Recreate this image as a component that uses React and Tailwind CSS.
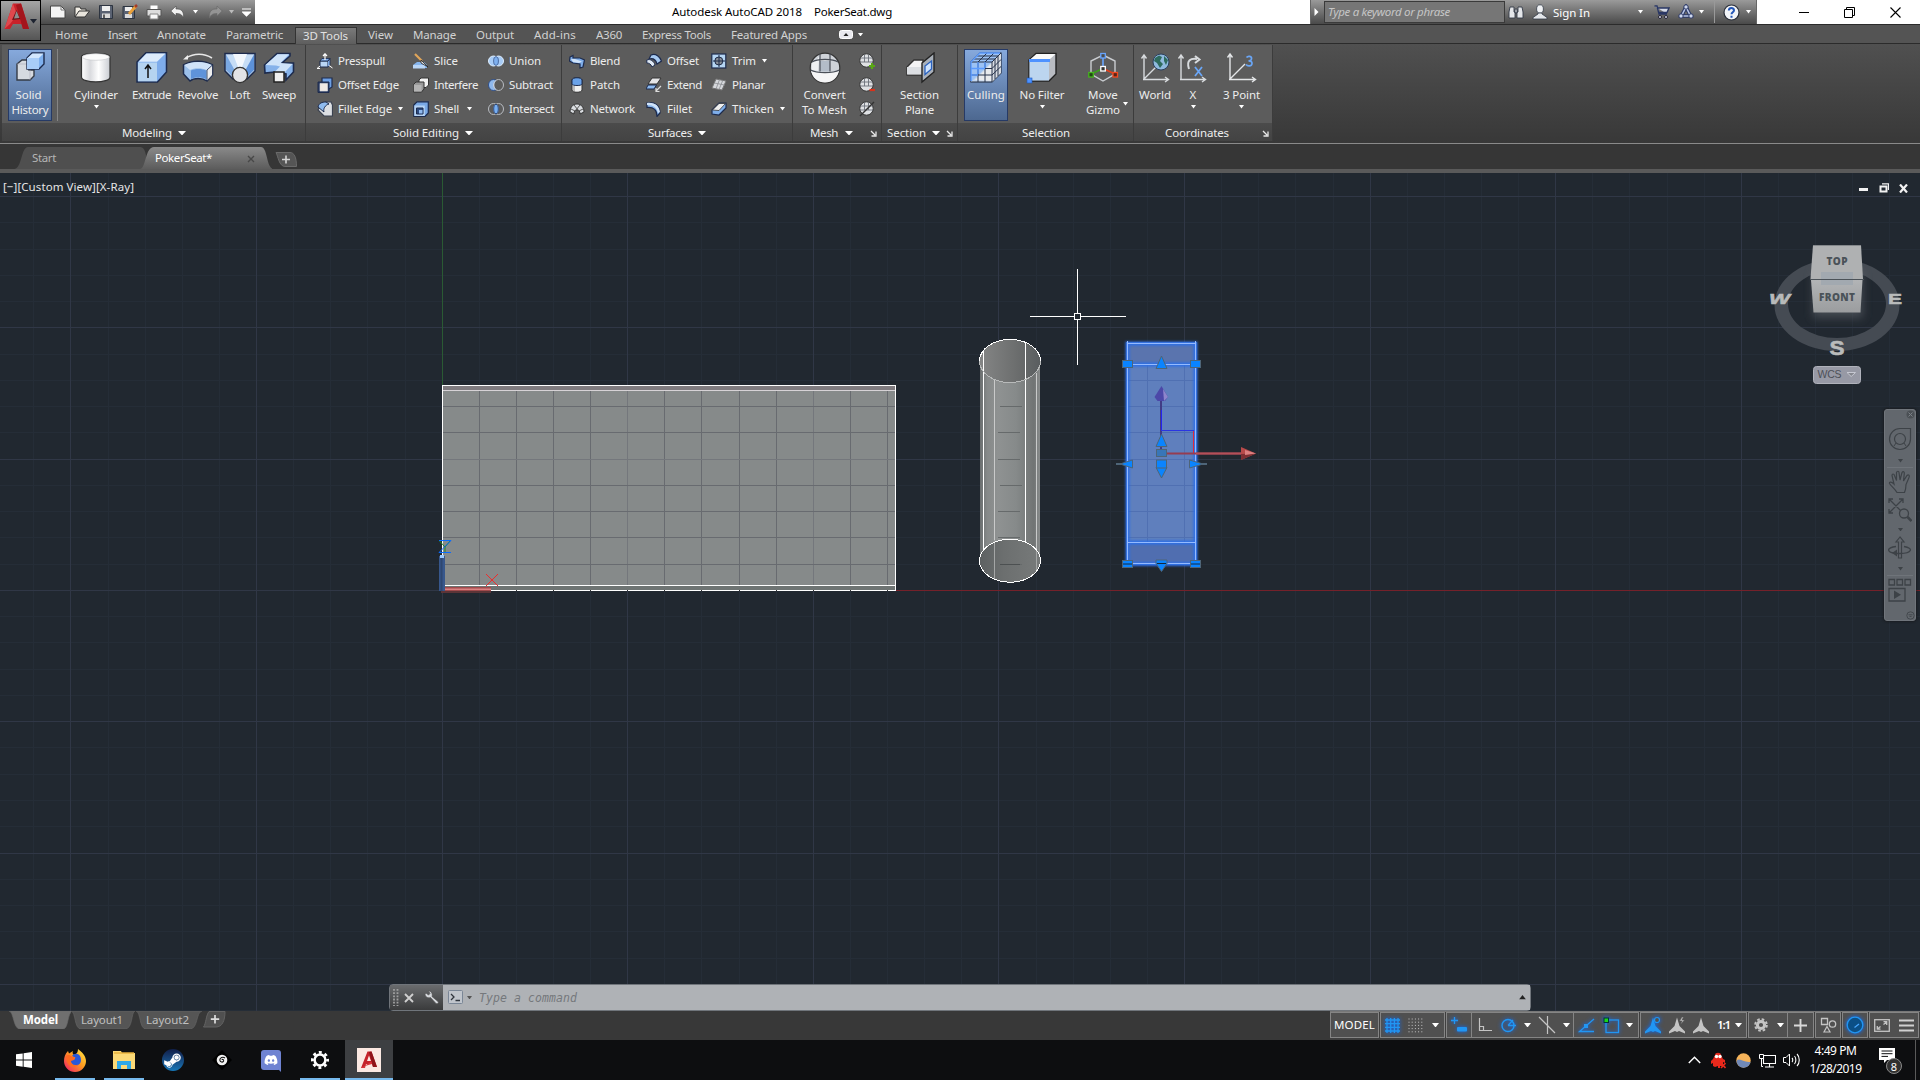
import React, { useLayoutEffect, useRef } from "react";
import { FaSteamSymbol, FaDiscord } from "react-icons/fa";

/* Text tuned to a target advance width through letter spacing. */
function Fit({ w, className = "", children }) {
  const ref = useRef(null);
  useLayoutEffect(() => {
    const el = ref.current;
    el.style.letterSpacing = "0px";
    const nat = el.getBoundingClientRect().width;
    const n = el.textContent.length;
    const ls = (w - nat) / n;
    el.style.letterSpacing = ls + "px";
  }, [w, children]);
  return (
    <span ref={ref} className={"inline-block whitespace-pre " + className}>
      {children}
    </span>
  );
}

function Svg({ s = 16, h, vb, className = "", children }) {
  return (
    <svg width={s} height={h || s} viewBox={vb || `0 0 ${s} ${h || s}`} className={"block shrink-0 " + className} fill="none">
      {children}
    </svg>
  );
}

const Caret = ({ className = "", c = "#fff", s = 5 }) => (
  <svg width={s} height={Math.ceil(s / 2) + 0.5} viewBox="0 0 10 5.5" preserveAspectRatio="none" className={"block shrink-0 " + className}>
    <path d="M0 0H10L5 5.5Z" fill={c} />
  </svg>
);

/* ---------- large ribbon icons (32px) ---------- */
const N = "#1d2b4d";
const big = {
  history: (
    <Svg s={32}>
      <path d="M3 12L8 8H15V18H20V24L16 28H3Z" fill="#d6dae0" stroke="#353b46" strokeWidth="1.4" />
      <path d="M3 12H16V28M16 12L20 8" stroke="#aab" strokeWidth=".6" />
      <path d="M13 6L18 1H30V12L25 17H13Z" fill="#7fb0ee" stroke={N} strokeWidth="1.4" />
      <path d="M13 6H25V17H13Z" fill="#a9cdf8" /><path d="M13.5 6L18.5 1.5H29.5L25 6Z" fill="#d2e6fd" />
    </Svg>
  ),
  cylinder: (
    <Svg s={32}>
      <defs><linearGradient id="cyl" x1="0" x2="1" y1="0" y2="0"><stop offset="0" stopColor="#fff" /><stop offset=".3" stopColor="#d9dade" /><stop offset=".6" stopColor="#fff" /><stop offset="1" stopColor="#c9ccd2" /></linearGradient></defs>
      <path d="M1.500 5C1.500 0 30 0 30 5V25C30 31.500 1.500 31.500 1.500 25Z" fill="url(#cyl)" stroke="#333" strokeWidth="1.200" />
      <ellipse cx="15.800" cy="5" rx="13.500" ry="3.300" fill="#fbfbfb" stroke="#c4c6ca" strokeWidth=".6" />
    </Svg>
  ),
  extrude: (
    <Svg s={32}>
      <path d="M1 10L10 .8H30.500V20L21.500 30H1Z" fill="#7eaceb" stroke={N} strokeWidth="1.500" />
      <path d="M2 10.500H21V29.300H2Z" fill="#b5d3f0" /><path d="M2.500 9.800L10.500 1.600H29.500L21 9.800Z" fill="#dcebfb" />
      <path d="M12 26V14M9 17L12 13L15 17" stroke="#111" strokeWidth="1.500" />
    </Svg>
  ),
  revolve: (
    <Svg s={32}>
      <path d="M4 6C12 1 22 1 30 6" stroke="#e8e8e8" strokeWidth="1.600" /><path d="M1 7.500L6 3V7.500Z" fill="#eee" />
      <path d="M1.500 13C10 8 22 8 30.500 13V23L25 29C20 25.500 12 25.500 8 29L1.500 22Z" fill="#9cc0ea" stroke={N} strokeWidth="1.500" />
      <path d="M2 13C10 9 22 9 30 13L24.500 18C20 15.500 12 15.500 8 18Z" fill="#cfe2f8" />
      <path d="M25 18L30.500 13V23L25 29Z" fill="#eee" stroke={N} strokeWidth=".8" />
      <path d="M9 18.500C13 16.500 20 16.500 24 18.500V27C19 24.500 13 24.500 9 27Z" fill="#5f93da" />
    </Svg>
  ),
  loft: (
    <Svg s={32}>
      <path d="M1 1.500H31V19L23 27H9L1 19Z" fill="#c6ddf6" stroke={N} strokeWidth="1.500" />
      <path d="M2 2.500L10 17V26L2 18Z" fill="#7aa8e2" /><path d="M30 2.500L22 17V26L30 18Z" fill="#5d92da" />
      <path d="M9 2L14 15H18L23 2Z" fill="#f2f7fd" />
      <circle cx="16" cy="23" r="7.600" fill="#e2e3e6" stroke="#333" strokeWidth="1.400" />
    </Svg>
  ),
  sweep: (
    <Svg s={32}>
      <path d="M1.500 13L14 1.500H27V4L19 11H30.500V20L23 28V22L12 20L2 21Z" fill="#86b2ea" stroke={N} strokeWidth="1.600" />
      <path d="M2.500 13L14.500 2.300H26L17.500 11L29.500 12L22 20H11.500L17 14.500L13 13.500Z" fill="#cfe3f9" />
      <rect x="11" y="20" width="10" height="10" fill="#efefef" stroke="#222" strokeWidth="1.500" />
    </Svg>
  ),
  mesh: (
    <Svg s={32}>
      <circle cx="16" cy="16" r="14.800" fill="#cfd3d9" stroke="#333" strokeWidth="1.200" />
      <path d="M2 18C8 22 24 22 30 18C29 26 23 30.500 16 30.500S3 26 2 18Z" fill="#f5f5f6" />
      <path d="M11 3L10 8L9 19L3 18L2.500 11L8 8Z" fill="#eef0f2" /><path d="M11 9H21V19.500H11Z" fill="#b3bcc8" />
      <path d="M3 10C8 6.500 24 6.500 29 10M1.500 18C8 21.500 24 21.500 30.500 18M11 2V19.500M21 2V19.500" stroke="#4a4f58" strokeWidth="1.200" />
    </Svg>
  ),
  section: (
    <Svg s={32}>
      <path d="M3 15L10 8H19V23H3Z" fill="#f3f3f4" stroke="#333" strokeWidth="1.400" /><path d="M3 15H18V22.500H3Z" fill="#dcdfe3" />
      <path d="M18 11L30 1V20L18 30Z" fill="#a9b0b9" stroke="#222" strokeWidth="1.400" />
      <path d="M21 14L27.500 9V17L21 22.500Z" fill="#cfe4ff" stroke="#2a62c0" strokeWidth="1.300" />
    </Svg>
  ),
  culling: (
    <Svg s={32}>
      <path d="M1 10L10 1H31V21L22 30H1Z" fill="#c3d6ef" stroke="#222b3c" strokeWidth="1.200" />
      <path d="M1 30V10L10 1H31Z" fill="#9cc2f4" /><path d="M22 10L31 1V21L22 30Z" fill="#d9dde3" /><path d="M5 28L22 11V29Z" fill="#e9ebee" />
      <path d="M1 10H22V30M22 10L31 1M8 10V30M15 10V30M1 16.500H22L31 7.500M1 23H22L31 14.500M8 10L17 1M15 10L24 1M25 7V27M28 4V24M4 7H25M7 4H28" stroke="#26324a" strokeWidth="1" />
      <path d="M1 29V10L10 1H30M1 16.500H15M8 10V22M1 23H8M15 10V16" stroke="#5b9bff" strokeWidth="1.400" />
    </Svg>
  ),
  nofilter: (
    <Svg s={32}>
      <path d="M3 8L10 1.500H30V22L23 29H3Z" fill="#b9bcc2" stroke="#222" strokeWidth="1.400" />
      <path d="M3.500 8L10.500 2H29.500L23 8Z" fill="#fafafa" /><path d="M3.500 8.500H23V28.500H3.500Z" fill="#bcd5ef" />
      <rect x="3" y="7" width="21" height="3" fill="#4e92ff" /><rect x="1" y="26" width="5" height="5" fill="#4e92ff" stroke="#1d57b8" strokeWidth=".6" />
    </Svg>
  ),
  gizmo: (
    <Svg s={32}>
      <path d="M16 3L28 9V22L16 29L4 22V9Z" stroke="#c9ccd0" strokeWidth="1.400" />
      <path d="M16 4V15" stroke="#67a5ff" strokeWidth="1.600" /><path d="M15 17L4 22" stroke="#3aa11c" strokeWidth="1.600" /><path d="M17 17L28 22" stroke="#e2401c" strokeWidth="1.600" />
      <rect x="13.800" y="1.500" width="4.500" height="4.500" fill="#4b4b4b" stroke="#67a5ff" strokeWidth="1.300" />
      <rect x="13.800" y="14.500" width="4.500" height="4.500" fill="#333" stroke="#fff" strokeWidth="1.300" />
      <rect x="1.800" y="20.500" width="4.500" height="4.500" fill="#224417" stroke="#46b51d" strokeWidth="1.300" />
      <rect x="26" y="20.500" width="4.500" height="4.500" fill="#5a2417" stroke="#f04a22" strokeWidth="1.300" />
    </Svg>
  ),
  world: (
    <Svg s={32}>
      <path d="M5 28V4M2.500 6.500L5 3L7.500 6.500M4 27.500H29M26 25L29.500 27.500L26 30M5 27L18 14" stroke="#d8dbde" strokeWidth="1.400" />
      <circle cx="22" cy="10" r="8" fill="#8fb9de" stroke="#2b3f5c" strokeWidth="1" />
      <path d="M16 6L20 3.500L23 5L21 9L24 12L21 16L18 11L15 9ZM25 4L29 8L27 13L25 9Z" fill="#2e6b5e" />
    </Svg>
  ),
  ucsx: (
    <Svg s={32}>
      <path d="M4 28V4M1.500 6.500L4 3L6.500 6.500M3 27.500H28M25 25L28.500 27.500L25 30" stroke="#d8dbde" strokeWidth="1.400" />
      <path d="M12 17C9 8 14 6 20 7M18 4L22.500 7.500L18 11" stroke="#d8dbde" strokeWidth="2" />
      <path d="M18 15L25 24M25 15L18 24" stroke="#6aa6f6" strokeWidth="1.800" />
    </Svg>
  ),
  point3: (
    <Svg s={32}>
      <path d="M4 28V3M1.500 5.500L4 2L6.500 5.500M3 27.500H29M26 25L29.500 27.500L26 30M4 27L19 12" stroke="#e4e6e8" strokeWidth="1.400" />
      <path d="M20.500 5.500C22 3.500 26 4 25.500 7C25.300 8.600 23.500 8.800 22.500 8.800C24.500 8.800 26.300 9.600 26 11.600C25.500 14.600 21.500 14.500 20 12.500" stroke="#6aa6f6" strokeWidth="1.700" />
    </Svg>
  ),
};

/* ---------- small ribbon icons (16px) ---------- */
const sm = {
  presspull: <Svg><path d="M3 8H11V14H3Z" fill="#b9d6f6" stroke={N} /><path d="M3 8L5 5.500H13L11 8ZM11 8L13 5.500V12L11 14" fill="#7fabe6" stroke={N} strokeWidth=".8" /><path d="M8 7V1M6 3L8 .8L10 3" stroke="#fff" strokeWidth="1.200" /><path d="M0 15.500L3 13M0 15.500H3M15.500 15L12 12.500" stroke="#fff" /></Svg>,
  offsetEdge: <Svg><path d="M5 1H15V10L12 12H5Z" fill="#6d9fe4" stroke={N} strokeWidth="1.200" /><path d="M1 5H12V15.500H1Z" fill="#2c3d63" stroke={N} /><path d="M3 6.500H10.500V14H3Z" fill="#efe9e4" stroke="#ddd" strokeWidth=".6" /></Svg>,
  filletEdge: <Svg><path d="M4 4L9 .8H14L15.500 4V15H7L1 9Z" fill="#dcdfe3" stroke="#3b4250" strokeWidth="1.200" /><path d="M1 6C2 2 5 1 9 1L12 3C8 4 6 8 7 11Z" fill="#8fbbee" stroke={N} /></Svg>,
  slice: <Svg><path d="M0 12L4 9H11L14 12V15H0Z" fill="#86b5ee" /><path d="M0 12H12V15.500H0Z" fill="#b9d6f8" /><path d="M2 1L9 8" stroke="#e0a55a" strokeWidth="2.200" /><path d="M8 7L15 14L8 10Z" fill="#e8e8e8" stroke="#222" strokeWidth=".8" /></Svg>,
  interfere: <Svg><path d="M6 3L8 1H15.500V8L13 10.500H6Z" fill="#f2f2f2" stroke="#333" /><path d="M.5 7.500L3 5H11V12L8.500 15H.5Z" fill="#9a9a9a" stroke="#333" /><path d="M.8 8H8.500V14.500H.8Z" fill="#b4b4b4" /></Svg>,
  shell: <Svg><path d="M.8 4L4 .8H15.300V12L12 15.300H.8Z" fill="#7aa9e6" stroke={N} strokeWidth="1.200" /><path d="M1.300 4.500H11.800V15H1.300Z" fill="#b4d2f4" /><path d="M3.500 7H10V13H3.500Z" fill="#2b4a80" stroke={N} /><path d="M6 9H9.500V12.500H6Z" fill="#8fb9ee" /></Svg>,
  union: <Svg><ellipse cx="5.500" cy="8" rx="5" ry="5" fill="#a8ccf6" stroke="#dfefff" /><ellipse cx="10.500" cy="8" rx="5" ry="5" fill="#a8ccf6" stroke="#dfefff" /><ellipse cx="8" cy="8" rx="2.400" ry="4.300" fill="#7fb0ee" stroke="#34538c" strokeWidth=".8" /></Svg>,
  subtract: <Svg><ellipse cx="5.500" cy="8" rx="5" ry="5.500" fill="#8fb9ee" stroke="#2f4f8a" /><ellipse cx="10.500" cy="8" rx="5" ry="5.500" stroke="#b8bcc2" fill="#5c5c5c" /><path d="M8 3.500C5 6 5 10 8 12.500" stroke="#c9dcf6" /></Svg>,
  intersect: <Svg><ellipse cx="5.500" cy="8" rx="5" ry="5.500" stroke="#b8bcc2" /><ellipse cx="10.500" cy="8" rx="5" ry="5.500" stroke="#b8bcc2" /><ellipse cx="8" cy="8" rx="2.300" ry="4.600" fill="#79b0f2" stroke="#29477e" /></Svg>,
  blend: <Svg><path d="M1 4L4 2.500V5H11L15.500 7L14 14L11 15V11L4 10L.5 8Z" fill="#7eade9" stroke={N} strokeWidth="1.200" /><path d="M2 6L6 6L13 8.500L10 10L4 9Z" fill="#cfe2f8" /></Svg>,
  patch: <Svg><path d="M3 3C3 0 13 0 13 3V13C13 16 3 16 3 13Z" fill="#f0f0f0" stroke="#333" /><path d="M3 3C3 0 13 0 13 3V7C13 9 3 9 3 7Z" fill="#6aa2e8" stroke={N} /><path d="M5 9V14" stroke="#bbb" strokeWidth="2" /></Svg>,
  network: <Svg><path d="M1 11C1 5 5 3 8 3S15 5 15 11L11 13C11 10 10 9 8 9S5 10 5 13Z" fill="#dadde1" stroke="#333" /><path d="M5 4L9 9M11 4L7 9M2 8L6 10M14 8L10 10" stroke="#555" /></Svg>,
  offset: <Svg><path d="M5 2C10 0 14 4 15.500 8L11 11C10 7 7 5 3 6Z" fill="#a7caf2" stroke={N} strokeWidth="1.200" /><path d="M.8 7C4 5.500 8 8 9 12L6 14C5 11 3 10 .8 10Z" fill="#dfe9f4" stroke={N} /></Svg>,
  extend: <Svg><path d="M6 1H15L11 7H2Z" fill="#e6e6e8" stroke="#333" /><path d="M2 8H10.500L8 12H0Z" fill="#8cbaf0" stroke={N} /><path d="M15 9L10 14M10 11V14.500H13.500" stroke="#ddd" strokeWidth="1.200" /></Svg>,
  fillet: <Svg><path d="M1 2C9 0 14 5 14 12L11 15.500C11 9 8 6 1 6.500Z" fill="#86b4ec" stroke={N} strokeWidth="1.200" /><path d="M1 2C9 1 13 5 14 11L12 12C11 7 8 4 1 4Z" fill="#cfe2f8" /></Svg>,
  trim: <Svg><rect x=".8" y="1" width="14" height="14" fill="#b5d5f3" stroke={N} strokeWidth="1.200" /><circle cx="7.800" cy="8" r="4" fill="#8a9099" stroke="#1c2a48" /><path d="M8 2V14M2 8H14" stroke="#1c2a48" /></Svg>,
  planar: <Svg><path d="M5 2L15 4L11 13L1 11Z" fill="#d6d8dc" stroke="#777" /><path d="M3.500 6L13.500 8M8.500 2.600L5 12M11.800 3.300L8 12.500" stroke="#8a8d92" strokeWidth=".8" /></Svg>,
  thicken: <Svg><path d="M1 9L8 2H15L15 7L8 14L1 13Z" fill="#7eade9" stroke={N} strokeWidth="1.200" /><path d="M1.500 9L8 2.500H14.500L8 9.500Z" fill="#efefef" stroke="#333" strokeWidth=".8" /></Svg>,
  meshAdd: <Ball><path d="M10 13H16M13 10V16" stroke="#59a814" strokeWidth="2.200" /></Ball>,
  meshSub: <Ball><path d="M10.500 13H16" stroke="#d8321b" strokeWidth="2.200" /></Ball>,
  meshSlash: <Ball><path d="M1 15L15 1" stroke="#333" strokeWidth="1.500" /></Ball>,
};
function Ball({ children }) {
  return (
    <Svg>
      <circle cx="7.500" cy="7.500" r="6.700" fill="#dfe1e4" stroke="#333" />
      <path d="M1.500 5H13.500M1 9H14M5.500 1.500V9M9.500 1.500V9" stroke="#6b7079" strokeWidth=".9" />
      {children}
    </Svg>
  );
}

/* ---------- ribbon pieces ---------- */
function Big({ icon, lines, className = "", drop, active }) {
  return (
    <div className={"flex h-[72px] flex-col items-center " + (active ? "border border-[#263a66] bg-linear-to-b from-[#86a9dc] to-[#4d6890] pt-[2px] " : "pt-[3px] ") + className}>
      {big[icon]}
      <div className="mt-[3px] flex flex-col items-center leading-[15px]">
        {lines.map(([t, w, c]) => <Fit key={t} w={w} className={c}>{t}</Fit>)}
      </div>
      {drop && <Caret className="mt-[3px]" />}
    </div>
  );
}

function Small({ icon, t, w, drop }) {
  return (
    <div className="flex h-6 items-center">
      {sm[icon]}
      <Fit w={w} className="ml-[5px] leading-4">{t}</Fit>
      {drop && <Caret className={drop} />}
    </div>
  );
}

function Panel({ className, title, children }) {
  return (
    <section className={"flex shrink-0 flex-col border-r border-[#3c3c3c] " + className}>
      <div className="flex h-[79px] bg-[#5c5c5c] pt-1">{children}</div>
      <div className="flex h-[18px] items-center bg-linear-to-b from-[#4b4b4b] to-[#434343] pt-[2px] leading-4">{title}</div>
    </section>
  );
}
const Corner = ({ className }) => (
  <Svg s={7} className={className}><path d="M1 1L5 5M6 1.500V6H1.500" stroke="#e8e8e8" strokeWidth="1.300" /></Svg>
);

const tabs = [
  ["Home", 33, "w-[53px]"], ["Insert", 29, "w-[49px]"], ["Annotate", 49, "w-[69px]"], ["Parametric", 57, "w-[69px]"],
];
const tabs2 = [
  ["View", 25, "w-[45px]"], ["Manage", 43, "w-[63px]"], ["Output", 38, "w-[58px]"], ["Add-ins", 42, "w-[62px]"],
  ["A360", 26, "w-[46px]"], ["Express Tools", 69, "w-[89px]"], ["Featured Apps", 76, "w-[108px]"],
];

function TitleBar() {
  return (
    <header className="flex h-6 bg-white">
      <div className="flex h-6 w-[255px] items-center bg-linear-to-b from-[#9a9a9a] to-[#4a4a4a] pl-[50px]">
        <Svg><path d="M.5 2H11L15 6V14H.5Z" fill="#f4f4f4" stroke="#444" /><path d="M11 2V6H15" stroke="#777" /></Svg>
        <Svg className="ml-2"><path d="M1 13V3H6L7 5H12V7" fill="#f3efe6" stroke="#333" /><path d="M1 13L5 7H15.500L11 13Z" fill="#e8e4dc" stroke="#333" /></Svg>
        <Svg className="ml-2"><path d="M1.500 1.500H14.500V14.500H1.500Z" fill="#5a6272" stroke="#2d3440" /><path d="M4 2H12V7H4Z" fill="#eee" /><path d="M4 9.500H12V14H4Z" fill="#dadada" /><path d="M6 10.500V14" stroke="#333" strokeWidth="1.500" /></Svg>
        <Svg className="ml-2"><path d="M1 2.500H12.500V14.500H1Z" fill="#5a6272" stroke="#2d3440" /><path d="M3 3H10V7H3Z" fill="#eee" /><path d="M3 10H10V14H3Z" fill="#dadada" /><path d="M7 10L14 2" stroke="#e9a03a" strokeWidth="2.800" /><path d="M13 3L15 1" stroke="#a23b2a" strokeWidth="2.500" /></Svg>
        <Svg className="ml-2"><path d="M4 1H12V6H4Z" fill="#fff" stroke="#888" /><path d="M1 5.500H15V12H1Z" fill="#ddd" stroke="#555" /><path d="M4 10H12V15H4Z" fill="#f8f8f8" stroke="#888" /></Svg>
        <Svg className="ml-2"><path d="M.8 7L6 2V5C12 4.500 14 8 13.500 14C12 10.500 10 9.500 6 9.500V12Z" fill="#f1f1f1" stroke="#555" strokeWidth=".7" /></Svg>
        <Caret className="ml-[7px]" />
        <Svg className="ml-[9px]"><path d="M15.200 7L10 2V5C4 4.500 2 8 2.500 14C4 10.500 6 9.500 10 9.500V12Z" fill="#949494" stroke="#6b6b6b" strokeWidth=".7" /></Svg>
        <Caret className="ml-[6px]" c="#bbb" />
        <Svg s={9} className="ml-2"><path d="M0 1H9M0.500 4H8.500L4.500 8Z" stroke="#fff" fill="#fff" strokeWidth="1.200" /></Svg>
      </div>
      <div className="flex flex-1 items-center pl-[417px] text-black">
        <Fit w={130}>Autodesk AutoCAD 2018</Fit>
        <Fit w={78} className="ml-3">PokerSeat.dwg</Fit>
      </div>
      <div className="flex h-6 w-[447px] items-center border-x border-[#666] bg-linear-to-b from-[#9a9a9a] to-[#4a4a4a]">
        <Svg s={5} h={8} className="ml-[3px]"><path d="M.5 0L4.500 4L.5 8Z" fill="#fff" /></Svg>
        <div className="ml-[5px] flex h-[22px] w-[181px] items-center border border-[#3a3a3a] bg-[#767676] pl-[3px] text-[#c6c6c6] italic">
          <Fit w={122}>Type a keyword or phrase</Fit>
        </div>
        <Svg className="ml-[3px]"><path d="M2 3H6V8H7V14H1V8ZM14 3H10V8H9V14H15V8ZM7 5H9V9H7Z" fill="#e5e7ea" stroke="#333b48" strokeWidth=".9" /></Svg>
        <Svg className="ml-2"><ellipse cx="8" cy="5" rx="3.400" ry="4.200" fill="#f0f2f5" stroke="#333b48" strokeWidth=".8" /><path d="M6 9H10V10L15 13.500V15H1V13.500L6 10Z" fill="#e3e6ea" stroke="#333b48" strokeWidth=".8" /></Svg>
        <Fit w={37} className="ml-[5px] pt-px text-white">Sign In</Fit>
        <Caret className="ml-[48px]" />
        <Svg className="ml-[11px]"><path d="M.5 2H3L5 10H13M4 4H15L13 8.500H5" fill="#d6dbe8" stroke="#2a3764" strokeWidth="1.400" /><circle cx="6" cy="13" r="1.500" fill="#dde" stroke="#223" /><circle cx="12" cy="13" r="1.500" fill="#dde" stroke="#223" /></Svg>
        <Svg className="ml-2"><path d="M8 3L3.500 12H12.500Z" stroke="#2a3764" strokeWidth="3.600" /><path d="M8 3L3.500 12H12.500Z" stroke="#b9c6e6" strokeWidth="1.600" /><circle cx="8" cy="3" r="2.200" fill="#cfd8ee" stroke="#2a3764" /><circle cx="3" cy="12" r="2.200" fill="#cfd8ee" stroke="#2a3764" /><circle cx="13" cy="12" r="2.200" fill="#cfd8ee" stroke="#2a3764" /></Svg>
        <Caret className="ml-[5px]" />
        <div className="ml-[10px] h-[22px] w-px bg-[#999]" />
        <Svg className="ml-2" s={17}><circle cx="8.500" cy="8.500" r="7.500" fill="#f2f4f8" stroke="#2a2f3a" strokeWidth="1.200" /><path d="M5.800 6.500C6 3.200 11 3.300 11 6.300C11 8.300 8.500 8.300 8.500 10.300M8.500 11.800V13.800" stroke="#2457b8" strokeWidth="2" /></Svg>
        <Caret className="ml-[6px]" />
      </div>
      <div className="flex w-[163px] items-center pl-[42px] text-black">
        <Svg s={10}><path d="M0 5.500H10" stroke="#000" /></Svg>
        <Svg s={11} className="ml-[35px]"><path d="M.5 2.500H8.500V10.500H.5ZM2.500 2.500V.5H10.500V8.500H8.500" stroke="#000" /></Svg>
        <Svg s={11} className="ml-[35px]"><path d="M.5 .5L10.500 10.500M10.500 .5L.5 10.500" stroke="#000" strokeWidth="1.100" /></Svg>
      </div>
    </header>
  );
}

function AppButton() {
  return (
    <div className="absolute top-0 left-0 z-10 flex h-[41px] w-[41px] border border-black bg-linear-to-b from-[#a5a5a5] to-[#555]">
      <Svg s={28} className="mt-[1px] ml-[2px]">
        <path d="M1.500 27L10 1.500H18L26 27H20L18.500 22H10L7 27Z" fill="#c8222a" />
        <path d="M10 1.500L14 13L7 22L1.500 27Z" fill="#e0484d" /><path d="M13.500 8L17.500 17L9 18Z" fill="#6b1216" /><path d="M13.500 9L16.500 16L11 16.500Z" fill="#8d8d8d" /><path d="M18 1.500L26 27H20L13 3Z" fill="#a3151c" />
      </Svg>
      <Caret s={7} c="#1d2330" className="mt-[18px] -ml-px" />
    </div>
  );
}

function Ribbon() {
  return (
    <>
      <nav className="flex h-5 border-y border-[#2b2b2b] bg-[#545454] pl-[55px] text-[#d2d2d2]">
        {tabs.map(([t, w, c]) => <div key={t} className={"flex h-full shrink-0 items-center pt-[2px] " + c}><Fit w={w}>{t}</Fit></div>)}
        <div className="mt-[2px] flex h-[18px] w-[62px] shrink-0 items-center border-x border-t border-[#333] bg-linear-to-b from-[#7a7a7a] to-[#5c5c5c] pb-px pl-[7px] text-[#e2e2e2]"><Fit w={45}>3D Tools</Fit></div>
        <div className="w-[11px] shrink-0" />
        {tabs2.map(([t, w, c]) => <div key={t} className={"flex h-full shrink-0 items-center pt-[2px] " + c}><Fit w={w}>{t}</Fit></div>)}
        <div className="flex items-center pt-px">
          <Svg s={14} h={9}><rect x=".5" y=".5" width="13" height="8" rx="2" fill="#e9e9ee" stroke="#fff" /><path d="M4.500 6L7 3L9.500 6Z" fill="#222" /></Svg>
          <Caret className="ml-[5px]" />
        </div>
      </nav>
      <div className="flex h-[100px] border-b border-[#8a8a8a] bg-linear-to-b from-[#505050] to-[#383838] pt-px pb-[2px] pl-[2px] text-[#ededed]">
        <Panel className="w-[304px]" title={<><Fit w={50} className="ml-[120px]">Modeling</Fit><Caret s={8} className="ml-[6px]" /></>}>
          <Big icon="history" active lines={[["Solid", 26, "-ml-[3px]"], ["History", 37]]} className="ml-[6px] w-[44px]" />
          <div className="ml-[5px] h-[72px] w-px bg-[#858585]" />
          <Big icon="cylinder" lines={[["Cylinder", 44]]} drop className="ml-2 w-[60px]" />
          <Big icon="extrude" lines={[["Extrude", 39]]} className="w-[51px]" />
          <Big icon="revolve" lines={[["Revolve", 41]]} className="w-[42px]" />
          <Big icon="loft" lines={[["Loft", 21]]} className="w-[42px]" />
          <Big icon="sweep" lines={[["Sweep", 34]]} className="w-[36px]" />
        </Panel>
        <Panel className="w-[256px]" title={<><Fit w={66} className="ml-[87px]">Solid Editing</Fit><Caret s={8} className="ml-[6px]" /></>}>
          <div className="ml-[11px] w-[96px]">
            <Small icon="presspull" t="Presspull" w={47} /><Small icon="offsetEdge" t="Offset Edge" w={61} /><Small icon="filletEdge" t="Fillet Edge" w={54} drop="ml-[6px]" />
          </div>
          <div className="w-[75px]">
            <Small icon="slice" t="Slice" w={24} /><Small icon="interfere" t="Interfere" w={44} /><Small icon="shell" t="Shell" w={25} drop="ml-2" />
          </div>
          <div>
            <Small icon="union" t="Union" w={32} /><Small icon="subtract" t="Subtract" w={44} /><Small icon="intersect" t="Intersect" w={45} />
          </div>
        </Panel>
        <Panel className="w-[231px]" title={<><Fit w={44} className="ml-[86px]">Surfaces</Fit><Caret s={8} className="ml-[6px]" /></>}>
          <div className="ml-[7px] w-[77px]">
            <Small icon="blend" t="Blend" w={30} /><Small icon="patch" t="Patch" w={30} /><Small icon="network" t="Network" w={45} />
          </div>
          <div className="w-[65px]">
            <Small icon="offset" t="Offset" w={32} /><Small icon="extend" t="Extend" w={35} /><Small icon="fillet" t="Fillet" w={25} />
          </div>
          <div>
            <Small icon="trim" t="Trim" w={24} drop="ml-[6px]" /><Small icon="planar" t="Planar" w={33} /><Small icon="thicken" t="Thicken" w={42} drop="ml-[6px]" />
          </div>
        </Panel>
        <Panel className="w-[89px]" title={<><Fit w={28} className="ml-[17px]">Mesh</Fit><Caret s={8} className="ml-[7px]" /><Corner className="ml-[17px]" /></>}>
          <Big icon="mesh" lines={[["Convert", 42], ["To Mesh", 45]]} className="ml-[5px] w-[53px]" />
          <div className="ml-2">
            <div className="flex h-6 items-center">{sm.meshAdd}</div><div className="flex h-6 items-center">{sm.meshSub}</div><div className="flex h-6 items-center">{sm.meshSlash}</div>
          </div>
        </Panel>
        <Panel className="w-[76px]" title={<><Fit w={39} className="ml-[5px]">Section</Fit><Caret s={8} className="ml-[6px]" /><Corner className="ml-[6px]" /></>}>
          <Big icon="section" lines={[["Section", 39], ["Plane", 29]]} className="w-full" />
        </Panel>
        <Panel className="w-[176px]" title={<Fit w={48} className="ml-[64px]">Selection</Fit>}>
          <Big icon="culling" active lines={[["Culling", 38]]} className="ml-[6px] w-[44px]" />
          <Big icon="nofilter" lines={[["No Filter", 45]]} drop className="ml-[5px] w-[58px]" />
          <Big icon="gizmo" lines={[["Move", 30], ["Gizmo", 34]]} className="ml-[13px] w-[38px]" />
          <Caret className="mt-[53px] ml-px" />
        </Panel>
        <Panel className="w-[139px]" title={<><Fit w={64} className="ml-[31px]">Coordinates</Fit><Corner className="ml-[33px]" /></>}>
          <Big icon="world" lines={[["World", 32]]} className="w-[42px]" />
          <Big icon="ucsx" lines={[["X", 7]]} drop className="w-[34px]" />
          <Big icon="point3" lines={[["3 Point", 37]]} drop className="ml-[11px] w-[41px]" />
        </Panel>
      </div>
    </>
  );
}

function FileTabs() {
  return (
    <div className="flex h-[29px] items-start border-b-4 border-[#5a5a5a] bg-[#363636] pt-[3px]">
      <div className="relative ml-[14px] h-[22px] w-[132px] text-[#b5b5b5]">
        <Svg s={132} h={22} className="absolute inset-0"><path d="M0 22C8 22 7 0 14 0H126C130 0 131 4 132 8V22Z" fill="#4f4f4f" /></Svg>
        <Fit w={24} className="absolute top-[3px] left-[18px]">Start</Fit>
      </div>
      <div className="relative -ml-[6px] h-[22px] w-[132px] text-white">
        <Svg s={132} h={22} className="absolute inset-0">
          <defs><linearGradient id="ft" x1="0" x2="0" y1="0" y2="1"><stop offset="0" stopColor="#8a8a8a" /><stop offset="1" stopColor="#5c5c5c" /></linearGradient></defs>
          <path d="M0 22C6 22 5 0 14 0H121C128 0 126 22 134 22Z" fill="url(#ft)" />
        </Svg>
        <Fit w={57} className="absolute top-[3px] left-[15px]">PokerSeat*</Fit>
        <Svg s={8} className="absolute top-[8px] left-[107px]"><path d="M1 1L7 7M7 1L1 7" stroke="#484848" strokeWidth="1.400" /></Svg>
      </div>
      <Svg s={23} h={15} className="mt-[5px] ml-[2px]"><path d="M2 .5H16C20 .5 22.500 5 22.500 14.500H11C5 14.500 4 4 2 .5Z" fill="#555" stroke="#6a6a6a" /><path d="M12 3.500V11.500M8 7.500H16" stroke="#d5d5d5" strokeWidth="1.600" /></Svg>
    </div>
  );
}

/* ---------- drawing area ---------- */
const vx = Array.from({ length: 52 }, (_, i) => i - 11).map((k) => [k, Math.floor(442.15 + 37.12 * k)]);
const hy = Array.from({ length: 32 }, (_, i) => i - 16).map((k) => [k, Math.floor(590.4 - 26.26 * k)]);
const boxX = vx.filter(([k]) => k >= 1 && k <= 12);
const boxY = hy.filter(([k]) => k >= 1 && k <= 7);
const gb = "#4e6578";

const Sq = ({ x, y, w = 10, h = 7 }) => <rect x={x - w / 2} y={y - h / 2} width={w} height={h} fill="#0a84ff" stroke={gb} />;

function Scene() {
  return (
    <svg width="1920" height="838" viewBox="0 173 1920 838" className="block" fill="none" fontFamily="Open Sans, Noto Sans, sans-serif">
      <defs>
        <linearGradient id="tube" x1="0" x2="1" y1="0" y2="0"><stop offset="0" stopColor="#6b6f70" /><stop offset=".12" stopColor="#868989" /><stop offset=".3" stopColor="#8f9292" /><stop offset=".6" stopColor="#868a8a" /><stop offset=".9" stopColor="#717474" /><stop offset="1" stopColor="#8a8d8d" /></linearGradient>
        <linearGradient id="cap" x1="0" x2="1" y1="0" y2="0"><stop offset="0" stopColor="#858686" /><stop offset=".6" stopColor="#6c6e6e" /><stop offset="1" stopColor="#595d5f" /></linearGradient>
        <linearGradient id="cap2" x1="0" x2="1" y1="0" y2="0"><stop offset="0" stopColor="#5d6162" /><stop offset=".4" stopColor="#6c6f6f" /><stop offset="1" stopColor="#777a7a" /></linearGradient>
        <linearGradient id="front" x1="0" x2="0" y1="0" y2="1"><stop offset="0" stopColor="#b2b4b6" /><stop offset="1" stopColor="#9b9d9f" /></linearGradient>
        <filter id="glow" x="-50%" y="-10%" width="200%" height="120%"><feGaussianBlur stdDeviation="0.9" /></filter>
        <filter id="shade" x="-30%" y="-30%" width="160%" height="160%"><feGaussianBlur stdDeviation="4" /></filter>
      </defs>
      <g shapeRendering="crispEdges">
        {hy.map(([k, y]) => k % 5 !== 0 && <rect key={k} x="0" y={y} width="1920" height="1" fill="#252d37" />)}
        {vx.map(([k, x]) => k % 5 !== 0 && <rect key={k} x={x} y="173" width="1" height="838" fill="#252d37" />)}
        {hy.map(([k, y]) => k % 5 === 0 && <rect key={k} x="0" y={y} width="1920" height="1" fill="#303746" />)}
        {vx.map(([k, x]) => k % 5 === 0 && <rect key={k} x={x} y="173" width="1" height="838" fill="#303746" />)}
        <rect x="442" y="173" width="1" height="213" fill="#2a5a33" />
        <rect x="895" y="590" width="1025" height="1" fill="#75212a" />
        {/* seat slab */}
        <rect x="442" y="385" width="454" height="206" fill="#868a8a" />
        <rect x="443" y="386" width="452" height="4" fill="#7f7b7f" />
        {boxX.map(([k, x]) => <rect key={k} x={x} y="391" width="1" height="194" fill={k % 5 ? "#686b70" : "#74777c"} />)}
        {boxY.map(([k, y]) => <rect key={k} x="443" y={y} width="452" height="1" fill={k % 5 ? "#686b70" : "#74777c"} />)}
        <rect x="443" y="586" width="452" height="4" fill="#6e7473" />
        <path d="M442.500 590V385.500H895.500V590.500H442M443 585.500H895" stroke="#fff" />
        <path d="M443 390.500H895" stroke="#d6d2d6" />
        {boxX.map(([k, x]) => <rect key={k} x={x} y="590" width="1" height="1" fill="#333" />)}
      </g>
      {/* tube */}
      <path d="M980 361V561A30 21.500 0 0 0 1040 561V361Z" fill="url(#tube)" />
      <ellipse cx="1010" cy="361" rx="30.500" ry="21.500" fill="url(#cap)" />
      <ellipse cx="1010" cy="560.700" rx="30.500" ry="21.500" fill="url(#cap2)" />
      <g shapeRendering="crispEdges">
        {boxY.map(([k, y]) => <rect key={k} x={k % 3 === 1 ? 1000 : 998} y={y} width="22" height="1" fill="#666a6b" />)}
        <path d="M994.500 380V540M1036.500 373V550" stroke="#c9caca" /><path d="M994.500 540V580M1036.500 550V571" stroke="#a4a6a6" />
        <path d="M983.500 350V551M1025.500 343V542" stroke="#fff" />
        <ellipse cx="1010" cy="361" rx="30.500" ry="21.500" stroke="#b8baba" />
        <path d="M979.500 361A30.500 21.500 0 0 1 1040.500 361" stroke="#fff" />
        <ellipse cx="1010" cy="560.700" rx="30.500" ry="21.500" stroke="#fff" />
        <rect x="1000" y="564" width="20" height="1" fill="#4c5051" />
      </g>
      {/* selected prism */}
      <rect x="1126" y="342" width="71" height="223" fill="#5f7fbd" />
      <rect x="1127" y="344" width="69" height="20" fill="#5a74ae" /><rect x="1127" y="543" width="69" height="20" fill="#506eb0" />
      <g shapeRendering="crispEdges" fill="#5070b2">
        {boxY.map(([k, y]) => <rect key={k} x="1128" y={y} width="68" height="1" />)}
        <rect x="1126" y="380" width="70" height="1" /><rect x="1147" y="364" width="1" height="178" /><rect x="1184" y="364" width="1" height="178" />
      </g>
      <path d="M1127.500 343.500H1195.500V564H1127.500ZM1127.500 364.500H1195.500M1127.500 542.500H1195.500" stroke="#2f6ee6" strokeWidth="4" filter="url(#glow)" />
      <path d="M1127.500 341V564M1195.500 341V564M1127.500 343.500H1195.500M1127.500 364.500H1195.500M1127.500 542.500H1195.500M1127.500 563.500H1195.500" stroke="#94baff" />
      {/* gizmo */}
      <path d="M1161 401V450" stroke="#413c86" strokeWidth="2" /><path d="M1161.500 410V430" stroke="#2424f0" />
      <path d="M1161.500 386L1168 397L1165 401H1157.500L1154.500 397Z" fill="#4c48a8" /><path d="M1163 389L1168 397L1164 401Z" fill="#8d86cc" />
      <path d="M1161 430.500H1194" stroke="#2a35e2" /><path d="M1193.500 431V453" stroke="#e02a3a" />
      <path d="M1166 453.500H1241" stroke="#963c50" strokeWidth="2" /><path d="M1196 453.500H1241" stroke="#b35058" strokeWidth="2" />
      <path d="M1241 447L1256 453.500L1241 460Z" fill="#b84a4a" /><path d="M1241 454L1256 453.500L1241 460Z" fill="#7e2f33" />
      <path d="M1245 450L1256 453.500L1245 455Z" fill="#dc8080" />
      {/* grips */}
      <Sq x={1127.5} y={364} /><Sq x={1195.5} y={364} />
      <g fill="#0a84ff" stroke={gb}>
        <path d="M1161.500 356L1167 368.500H1156Z" /><path d="M1161.500 434L1167 446.500H1156Z" /><path d="M1161.500 478L1156 467.500H1167Z" />
        <path d="M1132.500 460V468L1120 464Z" /><path d="M1189.500 460V468L1203 464Z" />
        <path d="M1156 560H1167V563.500L1161.500 571.500L1156 563.500Z" />
      </g>
      <path d="M1116 464H1122M1201 464H1207" stroke={gb} strokeWidth="2" />
      <Sq x={1161.5} y={464} h={8} />
      <rect x="1156.500" y="449.500" width="10" height="7" fill="#3876b8" stroke={gb} />
      <Sq x={1127.5} y={564} /><Sq x={1195.5} y={564} /><path d="M1123 564H1132M1191 564H1200M1157 563.500H1166" stroke="#14283c" />
      {/* crosshair */}
      <path d="M1077.500 269V313M1077.500 320V365M1030 316.500H1074M1081 316.500H1126" stroke="#fff" />
      <rect x="1074.500" y="313.500" width="6" height="6" stroke="#fff" />
      {/* UCS icon */}
      <rect x="439" y="556" width="6" height="35" fill="#37578c" /><rect x="440.500" y="557" width="2" height="34" fill="#2e4770" /><rect x="440" y="555" width="4" height="3" fill="#9ccaff" />
      <rect x="445" y="587" width="46" height="5" fill="#a04a4c" /><rect x="445" y="588.500" width="46" height="1.500" fill="#dc8282" /><rect x="441" y="591" width="50" height="2" fill="#5c3437" />
      <path d="M439.500 541L445 547V552M445 547L450 541" stroke="#1e8c1e" /><path d="M439 540.500H451L439 552.500H451" stroke="#0a6cff" />
      <path d="M486 574L498 586M498 574L486 586" stroke="#ee2b2b" />
      {/* view cube */}
      <path fillRule="evenodd" d="M1774.500 305a62.500 46 0 1 0 125 0a62.500 46 0 1 0 -125 0ZM1788 304a49 34 0 1 0 98 0a49 34 0 1 0 -98 0Z" fill="#454b53" />
      <rect x="1813" y="270" width="50" height="48" fill="#5b6167" filter="url(#shade)" opacity=".6" />
      <path d="M1813 245H1861L1863 279H1810.500Z" fill="#afb1b2" /><path d="M1811 280H1862.500L1860.500 312.500H1813.500Z" fill="url(#front)" />
      <rect x="1821" y="272" width="32" height="13" fill="#a2a9b0" /><path d="M1810 279.500H1864" stroke="#4b5258" />
      <path d="M1813 245.500H1861" stroke="#84888b" />
      <g fontWeight="800" textAnchor="middle" fill="#4a5258">
        <text x="1837" y="265" fontSize="10" textLength="21">TOP</text><text x="1837" y="300.500" fontSize="10" textLength="36">FRONT</text>
      </g>
      <g fontWeight="800" textAnchor="middle" fill="#b9bbbb" stroke="#b9bbbb" strokeWidth=".6" fontFamily="Liberation Sans, Arial, sans-serif">
        <text x="1779.500" y="303.500" fontSize="15.500" textLength="21" lengthAdjust="spacingAndGlyphs" fontStyle="italic">W</text>
        <text x="1895" y="303.500" fontSize="15.500" textLength="14" lengthAdjust="spacingAndGlyphs">E</text>
        <text x="1837" y="354.500" fontSize="20.500" textLength="15" lengthAdjust="spacingAndGlyphs">S</text>
      </g>
      <rect x="1813.500" y="366.500" width="47" height="17" rx="3" fill="#9799a5" stroke="#b0b2bb" />
      <text x="1817.500" y="378" fontSize="10.500" fill="#4d5058" textLength="24" fontFamily="Liberation Sans, Arial, sans-serif">WCS</text>
      <path d="M1847 372.500H1855.500L1851.200 376.500Z" stroke="#c6c8d2" fill="#85878f" />
    </svg>
  );
}

function NavBar() {
  const c = "#3d4247";
  return (
    <div className="absolute top-[236px] right-[4px] flex h-[212px] w-8 flex-col items-center rounded-[3px] border border-[#70757b] bg-[#62676d] shadow-[0_0_3px_#111]">
      <Svg s={9} className="ml-[20px]"><circle cx="4.500" cy="4.500" r="4" fill="#4b5055" /><path d="M2.500 2.500L6.500 6.500M6.500 2.500L2.500 6.500" stroke="#7b8086" /></Svg>
      <Svg s={24} className="mt-[8px]"><path d="M12 1.500H22.500V12A10.500 10.500 0 1 1 12 1.500Z" stroke={c} strokeWidth="1.200" /><circle cx="12" cy="12" r="5.500" stroke={c} strokeWidth="1.200" /><path d="M6 19L8 16M18 19L16 16" stroke={c} /></Svg>
      <Caret c={c} className="mt-[8px]" />
      <div className="mt-[4px] h-px w-[26px] bg-[#6f747a]" />
      <Svg s={24} className="mt-[3px]"><path d="M9 22.500C7 19 3 16 1.500 13.500C1 11.500 3.500 11.500 6 14L4 5.500C4 3.500 6 3.500 6.500 5.500L8.500 10.500L8.500 2.500C9 .8 11 .8 11 2.500L12 10L14 2.500C15 1 16.500 1.500 16.300 3.500L15.500 11L19 5.500C20.500 4 22 5.500 21 7.500L18 14.500C18 18 17.500 20 16.500 22.500Z" stroke={c} strokeWidth="1.200" /></Svg>
      <Svg s={24} className="mt-[4px]"><path d="M1 1L15 15M15 1L1 15M1 5V1H5M11 1H15V5M1 11V15H5" stroke={c} strokeWidth="1.300" /><circle cx="16" cy="15.500" r="4.500" fill="#62676d" stroke={c} strokeWidth="1.300" /><path d="M19.500 19L23.500 23" stroke={c} strokeWidth="2.500" /></Svg>
      <Caret c={c} className="mt-[6px]" />
      <Svg s={24} className="mt-[5px]"><path d="M12 1L8 6H10.500V22H13.500V6H16Z" stroke={c} strokeWidth="1.200" /><path d="M8 10.500C-3 12 0 16.500 6 17M16 10.500C26 12 24 17.500 12 17.500H8" stroke={c} strokeWidth="1.300" /><path d="M4 17L9 13.500V20.500Z" fill={c} /></Svg>
      <Caret c={c} className="mt-[7px]" />
      <div className="mt-[4px] h-px w-[26px] bg-[#6f747a]" />
      <Svg s={24} className="mt-[3px]"><path d="M1 1.500H6.500V7H1ZM9 1.500H14.500V7H9ZM17 1.500H22.500V7H17ZM1 10.500H17V23H1Z" stroke={c} strokeWidth="1.300" /><path d="M6 12.500L13 16.700L6 21Z" fill={c} /></Svg>
      <Svg s={9} className="mt-[9px] ml-[20px]"><circle cx="4.500" cy="4.500" r="3.700" stroke="#44494e" /><path d="M2.500 3.800H6.500M3.500 5.500H5.500" stroke="#44494e" /></Svg>
    </div>
  );
}

function Viewport() {
  return (
    <main className="relative h-[838px] bg-[#212830]">
      <Scene />
      <Fit w={131} className="absolute top-[6px] left-[3px] text-[#e6e6e6]">[−][Custom View][X-Ray]</Fit>
      <div className="absolute top-[10px] right-3 flex items-end">
        <Svg s={9} h={5} className="mb-px"><path d="M0 2.500H9" stroke="#f2f2f2" strokeWidth="3" /></Svg>
        <Svg s={10} className="ml-[11px]"><path d="M1.500 3.500H7.500V8.500H1.500Z" stroke="#f2f2f2" strokeWidth="2" /><path d="M3 .8H9.500V7" stroke="#f2f2f2" strokeWidth="1.200" /></Svg>
        <Svg s={9} className="ml-[10px]"><path d="M1 0.500L8 8.500M8 .5L1 8.500" stroke="#f2f2f2" strokeWidth="2.200" /></Svg>
      </div>
      <NavBar />
      <div className="absolute top-[811px] left-[389px] flex h-[27px] w-[1142px] rounded-sm border border-[#70757b]">
        <div className="flex w-[53px] items-center bg-linear-to-b from-[#6a6c6e] to-[#3a3b3c]">
          <Svg s={6} h={17} className="ml-[3px]"><path d="M1 0V17M4.500 0V17" stroke="#a0a0a0" strokeWidth="1.800" strokeDasharray="1.800 1.400" /></Svg>
          <Svg s={10} className="ml-[5px]"><path d="M1 1L9 9M9 1L1 9" stroke="#cfcfcf" strokeWidth="1.900" /></Svg>
          <Svg s={15} className="ml-[10px]"><path d="M1 4C1 7 4 8.500 6.500 7.500L12 13.500C13.500 14.500 15 13 14 11.500L8 6.500C9 3.500 7 1 4.500 1L6 3.500L4.500 5L2 3Z" fill="#d5d8dc" stroke="#555" strokeWidth=".7" /></Svg>
        </div>
        <div className="flex flex-1 items-center bg-[#afb2b6] pl-[5px]">
          <Svg s={15}><rect x=".5" y=".5" width="14" height="13" rx="1" fill="#c0c5cc" stroke="#7a8696" /><path d="M3 4L6 7L3 10M7.500 10.500H12" stroke="#2f353d" strokeWidth="1.300" /></Svg>
          <Caret c="#555" className="ml-[4px]" />
          <Fit w={98} className="ml-[7px] font-['DejaVu_Sans_Mono','Liberation_Mono',monospace] text-[11.5px] text-[#75787c] italic">Type a command</Fit>
          <Caret c="#222" s={7} className="mr-[4px] ml-auto rotate-180" />
        </div>
      </div>
    </main>
  );
}

/* ---------- layout tabs and status bar ---------- */
const B = "#2196f3";
const G = "#c4c4c4";
const Anno = ({ c }) => <path d="M9 1.500L11.500 10L17 15.500V17.500L11 15L9 16L7 15L1 17.500V15.500L6.500 10Z" fill={c} />;
const glow = "drop-shadow-[0_0_2px_#0a6cff]";
const Cell = ({ className, children }) => <div className={"flex h-full shrink-0 items-center justify-center " + className}>{children}</div>;
const Group = ({ className, children }) => <div className={"flex h-[26px] shrink-0 items-center border border-[#858585] bg-[#505050] " + className}>{children}</div>;

function StatusBar() {
  return (
    <div className="flex h-[29px] bg-[#383838]">
      <div className="relative flex h-[18px] w-[1330px] shrink-0 pl-[9px]">
        <Tab w={62} d="M0 0C5 1 4 18 11 18H54C60 18 58 1 64 0Z" f="#6f6f6f" className="z-10 w-[60px] font-bold text-white"><Fit w={35} className="ml-[14px]">Model</Fit></Tab>
        <Tab w={70} d="M2 0C7 1 5 18 12 18H56C64 18 62 1 66 0Z" f="#555" className="w-[65px] text-[#c0c0c0]"><Fit w={42} className="ml-[12px]">Layout1</Fit></Tab>
        <Tab w={70} d="M2 0C7 1 5 18 12 18H56C64 18 62 1 68 0Z" f="#555" className="w-[68px] text-[#c0c0c0]"><Fit w={43} className="ml-[12px]">Layout2</Fit></Tab>
        <Svg s={24} h={17}><path d="M7 .5H23C23 10 20 16 14 16H1.500C4 13 4 4 7 .5Z" fill="#505050" stroke="#636363" /><path d="M13 4V12.500M8.800 8.200H17.200" stroke="#ddd" strokeWidth="1.700" /></Svg>
      </div>
      <div className="flex w-[590px] gap-px border-t border-[#777] bg-[#3f3f3f] text-white">
        <Group className="w-[49px] justify-center"><Fit w={41}>MODEL</Fit></Group>
        <Group className="w-[65px]">
          <Cell className="w-[23px]"><Svg s={15} className={glow}><path d="M2 0V15M5.700 0V15M9.400 0V15M13 0V15M0 2H15M0 5.700H15M0 9.400H15M0 13H15" stroke={B} strokeWidth="1.300" /></Svg></Cell>
          <Cell className="w-[23px]"><Svg s={15}><path d="M.5 1H15M.5 4.200H15M.5 7.400H15M.5 10.600H15M.5 13.800H15" stroke={G} strokeDasharray="1 2.200" /></Svg></Cell>
          <Cell className="w-[17px]"><Caret s={7} /></Cell>
        </Group>
        <Group className="w-[193px]">
          <Cell className="w-[25px] border-r border-[#858585]"><Svg s={18} className={glow}><path d="M4.500 1V8M1 4.500H8" stroke={B} strokeWidth="1.300" /><rect x="7" y="11" width="10" height="4.500" rx="1" fill={B} /></Svg></Cell>
          <Cell className="w-[25px]"><Svg s={14}><path d="M1.500 0V12.500H14M1.500 8.500H5.500V12" stroke={G} strokeWidth="1.200" /></Svg></Cell>
          <Cell className="w-[23px]"><Svg s={17} className={glow}><circle cx="8" cy="8.500" r="6" stroke={B} strokeWidth="1.500" /><path d="M8 8.500H16M8 8.500L13 3" stroke={B} strokeWidth="1.300" /></Svg></Cell>
          <Cell className="w-[15px]"><Caret s={7} /></Cell>
          <Cell className="w-[24px]"><Svg s={18}><path d="M1 1L17 17M9.500 0V18" stroke={G} strokeWidth="1.200" /></Svg></Cell>
          <Cell className="w-[15px] border-r border-[#858585]"><Caret s={7} /></Cell>
          <Cell className="w-[25px]"><Svg s={17} className={glow}><path d="M16 2L1.500 14.500H16" stroke={B} strokeWidth="1.300" /><rect x="6" y="7" width="4" height="4" fill={B} /></Svg></Cell>
          <Cell className="w-[24px]"><Svg s={17} className={glow}><rect x="3" y="3" width="12.500" height="12.500" stroke={B} strokeWidth="1.300" /><rect x="1" y="1" width="4.500" height="4.500" fill="#18d818" stroke="#033" /></Svg></Cell>
          <Cell className="w-[13px]"><Caret s={7} /></Cell>
        </Group>
        <Group className="w-[107px]">
          <Cell className="w-[24px]"><Svg s={18} className={glow}><Anno c={B} /><circle cx="13" cy="4" r="2.500" stroke={B} fill="#505050" strokeWidth="1.200" /></Svg></Cell>
          <Cell className="w-[24px]"><Svg s={18}><Anno c={G} /><path d="M14 1L11.500 5H14L12.500 8.500L16.500 4H14L15.500 1Z" fill={G} stroke="#505050" strokeWidth=".5" /></Svg></Cell>
          <Cell className="w-[23px]"><Svg s={18}><Anno c={G} /></Svg></Cell>
          <Cell className="w-[23px]"><Fit w={13} className="font-semibold">1:1</Fit></Cell>
          <Caret s={7} />
        </Group>
        <Group className="w-[66px]">
          <Cell className="w-[24px]"><Svg s={14}><circle cx="7" cy="7" r="5.800" stroke={G} strokeWidth="2" strokeDasharray="2.600 1.950" /><circle cx="7" cy="7" r="3.600" stroke={G} strokeWidth="3" /></Svg></Cell>
          <Cell className="w-[15px] border-r border-[#858585]"><Caret s={7} /></Cell>
          <Cell className="w-[25px]"><Svg s={15}><path d="M7.500 1V14M1 7.500H14" stroke="#d8d8d8" strokeWidth="1.900" /></Svg></Cell>
        </Group>
        <Group className="w-[26px] justify-center"><Svg s={17}><path d="M1.500 1.500H7.500V7.500H1.500Z" stroke={G} strokeWidth="1.300" /><circle cx="12.500" cy="7" r="3.200" stroke={G} strokeWidth="1.300" /><path d="M7 9.500L10 15H4Z" stroke={G} strokeWidth="1.200" /></Svg></Group>
        <Group className="w-[26px] justify-center"><Svg s={18} className={glow}><circle cx="9" cy="9" r="7.800" fill="#0b4f86" stroke={B} strokeWidth="1.300" /><path d="M8.500 11.500L13 8" stroke="#4aa8ff" strokeWidth="1.200" /></Svg></Group>
        <Group className="w-[50px]">
          <Cell className="w-[24px]"><Svg s={16} h={13}><rect x=".7" y=".7" width="14.600" height="11.600" stroke={G} strokeWidth="1.300" /><path d="M9.500 5.500L12.500 3M9.500 2.700H12.700V6M6.500 7.500L3.500 10M3.300 7V10.200H6.500" stroke={G} strokeWidth="1.300" /></Svg></Cell>
          <Cell className="w-[24px]"><Svg s={15} h={13}><path d="M0 1.500H15M0 6.500H15M0 11.500H15" stroke="#d0d0d0" strokeWidth="1.800" /></Svg></Cell>
        </Group>
      </div>
    </div>
  );
}
function Tab({ w, d, f, className, children }) {
  return (
    <div className={"relative flex h-[18px] shrink-0 items-center " + className}>
      <Svg s={w} h={18} className="absolute top-0 left-0"><path d={d} fill={f} stroke="#686868" strokeWidth=".6" /></Svg>
      <div className="relative flex">{children}</div>
    </div>
  );
}

function Task({ className = "", open, active, children }) {
  return (
    <div className={"relative flex h-10 shrink-0 items-center justify-center " + (active ? "bg-[#3d3f42] " : "") + className}>
      {children}
      {open && <div className="absolute bottom-0 h-[2px] w-10 bg-[#76b9ed]" />}
      {active && <div className="absolute bottom-0 h-[2px] w-full bg-[#76b9ed]" />}
    </div>
  );
}

function Taskbar() {
  return (
    <footer className="flex h-10 bg-[#0d0e10] text-white">
      <Task className="w-12"><Svg s={16}><path d="M0 2.300L6.700 1.400V7.600H0ZM7.600 1.300L16 .1V7.600H7.600ZM0 8.500H6.700V14.700L0 13.800ZM7.600 8.500H16V16L7.600 14.800Z" fill="#fff" /></Svg></Task>
      <Task className="ml-[2px] w-[49px]" open>
        <Svg s={24}>
          <defs><linearGradient id="ff" x1="1" x2="0" y1="0" y2="1"><stop offset="0" stopColor="#fff04a" /><stop offset=".45" stopColor="#ff9a1f" /><stop offset="1" stopColor="#f0136b" /></linearGradient></defs>
          <path d="M15 1C19 4 23 8 23 13A11 11 0 0 1 1 13C1 9 2 6 5 3L6 5.500L10 3C9 5 10 6 11 7C14 6 15 4 15 1Z" fill="url(#ff)" />
          <path d="M17 8C19 12 18 16 14 17.500C9 19 7 15 7.500 12L11 12L12 9.500L9 8C11 5 15 5 17 8Z" fill="#2a58d8" /><path d="M3 9C4 6 7 7 9 8.500L12.500 9.500L11 12L8 13C8 16 11 18 15 16.500C11 22 4 19 3 9Z" fill="#ff6a22" />
        </Svg>
      </Task>
      <Task className="w-[49px]" open><Svg s={22} h={20}><path d="M0 1H8L9 3H22V19H0Z" fill="#fbd977" /><path d="M1 3H21" stroke="#e8b23c" strokeWidth="1.500" /><path d="M4 19V11H18V19H14V15H8V19Z" fill="#2fa8e8" /></Svg></Task>
      <Task className="w-[49px]"><div className="flex h-[22px] w-[22px] items-center justify-center rounded-full bg-linear-to-b from-[#101f4a] to-[#1577b8]"><FaSteamSymbol size={19} color="#fff" /></div></Task>
      <Task className="w-[49px]"><Svg s={20}><path d="M10 0L15 5L20 10L15 15L10 20L5 15L0 10L5 5Z" fill="#000" /><circle cx="10" cy="10" r="5.300" fill="#f2f2f2" /><path d="M10 10C10 9 12 9.300 11.600 11C11 12.800 8 12.300 7.800 10C7.800 7.500 11 6.500 13 8" stroke="#111" strokeWidth="1.100" /></Svg></Task>
      <Task className="w-[49px]">
        <div className="relative flex h-5 w-5 items-center justify-center rounded-[3px] bg-[#6f83d2]">
          <FaDiscord size={14} color="#fff" />
          <Svg s={5} className="absolute right-0 -bottom-[2px]"><path d="M0 0H5V5Z" fill="#6f83d2" /></Svg>
        </div>
      </Task>
      <Task className="w-[50px]" open><Svg s={18}><circle cx="9" cy="9" r="5.400" stroke="#fff" strokeWidth="2.500" /><circle cx="9" cy="9" r="7.600" stroke="#fff" strokeWidth="2.800" strokeDasharray="2.900 3.070" strokeDashoffset="1.400" /></Svg></Task>
      <Task className="w-12" active>
        <Svg s={24}><rect width="24" height="24" fill="#fbe9e3" /><path d="M4 20L10.500 3.500H14.500L20 19H16L15 16H9L8 20Z" fill="#c4232b" /><path d="M12 7.500L14 13H10Z" fill="#fbe9e3" /><path d="M14.500 3.500L20 19H16L12 4Z" fill="#8e151b" /><path d="M4 20L14.500 13.500L15 16L8 18V20Z" fill="#d9363c" /></Svg>
      </Task>
      <div className="ml-auto flex items-center">
        <Svg s={13} h={8}><path d="M.8 7L6.500 1.200L12.200 7" stroke="#fff" strokeWidth="1.400" /></Svg>
        <Svg s={15} h={17} className="ml-[10px]"><path d="M4 3C4 0 10 0 10 3L12 7L14 8V11L12 10V14H9V16H7V14L4 15L2 14V11L0 12V9L2 7Z" fill="#e8291c" /><circle cx="5.500" cy="4.500" r="1.700" fill="#fff" /><circle cx="9" cy="4.500" r="1.700" fill="#fff" /><path d="M10 11L14.500 16M14.500 11L10 16" stroke="#e8291c" strokeWidth="1.600" /></Svg>
        <Svg s={15} className="ml-[10px]"><circle cx="7.500" cy="7.500" r="7.200" fill="#f6b45a" /><path d="M.5 8C4 4 7 10 14.500 9C13.500 13 11 14.700 7.500 14.700S1 12 .5 8Z" fill="#7089b8" /></Svg>
        <Svg s={17} h={15} className="ml-2"><path d="M4.500 2.500H16.500V10.500H4.500ZM10.500 10.500V14M6 14H15" stroke="#fff" strokeWidth="1.100" /><path d="M.5 1.500H4.500V5.500H.5ZM2.500 5.500V13.500H4" fill="#0d0e10" stroke="#fff" /></Svg>
        <Svg s={17} h={14} className="ml-[7px]"><path d="M.5 4.500H3L6.500 1V13L3 9.500H.5Z" stroke="#fff" /><path d="M9 5C10 6 10 8 9 9M11.500 3C13.300 5 13.300 9 11.500 11M14 1C17 4 17 10 14 13" stroke="#fff" strokeWidth="1.100" /></Svg>
        <div className="ml-[9px] flex w-[53px] flex-col items-center text-[12px] leading-[18px]">
          <Fit w={42}>4:49 PM</Fit><Fit w={52}>1/28/2019</Fit>
        </div>
        <div className="relative ml-[17px] h-[26px] w-6">
          <Svg s={16}><path d="M0 1H16V13H8L5 16V13H0Z" fill="#fff" /><path d="M2.500 4H13.500M2.500 6.700H13.500M2.500 9.400H9" stroke="#0d0e10" /></Svg>
          <div className="absolute right-px -bottom-px flex h-4 w-4 items-center justify-center rounded-full border border-[#8a8a8a] bg-[#303030] text-[11px] leading-none">8</div>
        </div>
        <div className="mr-1 ml-3 h-10 w-px bg-[#5a5a5a]" />
      </div>
    </footer>
  );
}

export default function App() {
  return (
    <div className="relative flex h-[1080px] w-[1920px] flex-col overflow-hidden bg-[#383838] font-['Noto_Sans','Open_Sans',sans-serif] text-[11.5px] leading-4">
      <TitleBar />
      <AppButton />
      <Ribbon />
      <FileTabs />
      <Viewport />
      <StatusBar />
      <Taskbar />
    </div>
  );
}
